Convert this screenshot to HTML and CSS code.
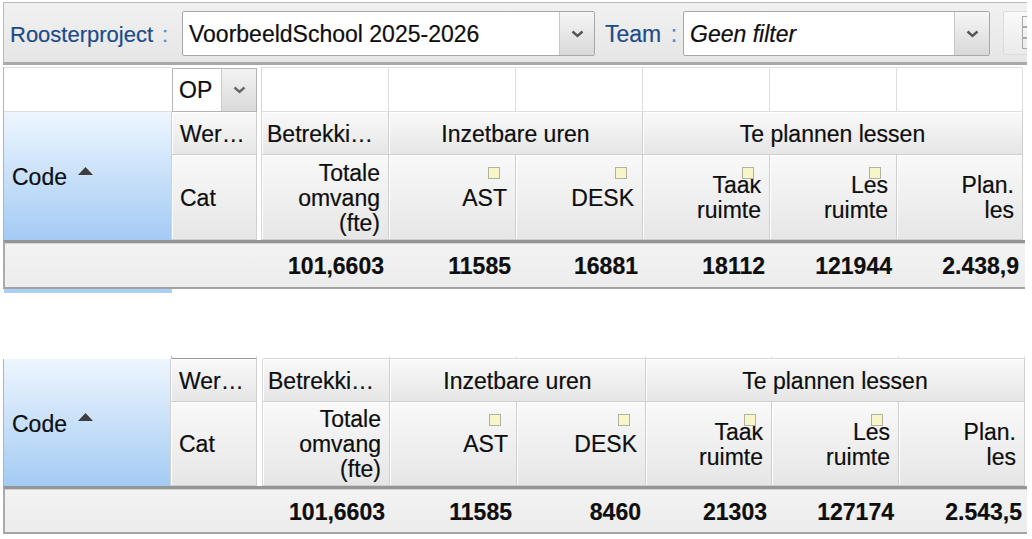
FILE: index.html
```html
<!DOCTYPE html>
<html lang="nl">
<head>
<meta charset="utf-8">
<title>Rooster</title>
<link rel="stylesheet" href="styles.css">
</head>
<body>
<div class="page">
  <div class="toolbar">
    <span class="label label-project">Roosterproject<span class="colon">:</span></span>
    <div class="combo combo-project">
      <span class="combo-text">VoorbeeldSchool 2025-2026</span>
      <span class="combo-btn"><svg width="13" height="8" viewBox="0 0 13 8"><polyline points="1.5,1.5 6.5,6 11.5,1.5" fill="none" stroke="#555" stroke-width="2.4"/></svg></span>
    </div>
    <span class="label label-team">Team&nbsp;<span class="colon colon-team">:</span></span>
    <div class="combo combo-team">
      <span class="combo-text italic">Geen filter</span>
      <span class="combo-btn"><svg width="13" height="8" viewBox="0 0 13 8"><polyline points="1.5,1.5 6.5,6 11.5,1.5" fill="none" stroke="#555" stroke-width="2.4"/></svg></span>
    </div>
    <div class="tool-btn">
      <svg class="tool-icon" width="10" height="34" viewBox="0 0 10 34"><rect x="0.5" y="0.5" width="12" height="10" fill="none" stroke="#a8a8a8"/><rect x="0.5" y="11.5" width="12" height="10" fill="none" stroke="#a8a8a8"/><rect x="0.5" y="22.5" width="12" height="10" fill="none" stroke="#a8a8a8"/></svg>
    </div>
  </div>

  <section class="grid grid-a">
    <div class="fc fc-blank"></div>
    <div class="fc fc-op">
      <div class="op-box"><span class="op-text">OP</span><span class="op-btn"><svg width="13" height="8" viewBox="0 0 13 8"><polyline points="1.5,1.5 6.5,6 11.5,1.5" fill="none" stroke="#666" stroke-width="2.4"/></svg></span></div>
    </div>
    <div class="gapcol"></div>
    <div class="fc"></div>
    <div class="fc"></div>
    <div class="fc"></div>
    <div class="fc"></div>
    <div class="fc"></div>
    <div class="fc"></div>

    <div class="code">Code <svg class="sort" width="15" height="8" viewBox="0 0 15 8"><polygon points="0,8 7.5,0 15,8" fill="#3e3e3e"/></svg></div>
    <div class="hd r1 left">Wer…</div>
    <div class="hd r1 left tight">Betrekki…</div>
    <div class="hd r1 center span2">Inzetbare uren</div>
    <div class="hd r1 center span3">Te plannen lessen</div>

    <div class="hd r2 left">Cat</div>
    <div class="hd r2">Totale<br>omvang<br>(fte)</div>
    <div class="hd r2"><span class="ind"></span>AST</div>
    <div class="hd r2"><span class="ind"></span>DESK</div>
    <div class="hd r2"><span class="ind"></span>Taak<br>ruimte</div>
    <div class="hd r2"><span class="ind"></span>Les<br>ruimte</div>
    <div class="hd r2">Plan.<br>les</div>
  </section>
  <div class="totals totals-a">
    <span></span><span></span><span></span>
    <span class="tv">101,6603</span>
    <span class="tv">11585</span>
    <span class="tv">16881</span>
    <span class="tv">18112</span>
    <span class="tv">121944</span>
    <span class="tv">2.438,9</span>
  </div>
  <div class="tail"></div>

  <section class="grid grid-b">
    <div class="stub stub-blank"></div>
    <div class="stub stub-op"></div>
    <div class="stub stub-gap"></div>
    <div class="stub"></div>
    <div class="stub"></div>
    <div class="stub"></div>
    <div class="stub"></div>
    <div class="stub"></div>
    <div class="stub"></div>

    <div class="code">Code <svg class="sort" width="15" height="8" viewBox="0 0 15 8"><polygon points="0,8 7.5,0 15,8" fill="#3e3e3e"/></svg></div>
    <div class="hd r1 left">Wer…</div>
    <div class="gapcol gapcol-b"></div>
    <div class="hd r1 left tight">Betrekki…</div>
    <div class="hd r1 center span2">Inzetbare uren</div>
    <div class="hd r1 center span3">Te plannen lessen</div>

    <div class="hd r2 left">Cat</div>
    <div class="hd r2">Totale<br>omvang<br>(fte)</div>
    <div class="hd r2"><span class="ind"></span>AST</div>
    <div class="hd r2"><span class="ind"></span>DESK</div>
    <div class="hd r2"><span class="ind"></span>Taak<br>ruimte</div>
    <div class="hd r2"><span class="ind"></span>Les<br>ruimte</div>
    <div class="hd r2">Plan.<br>les</div>
  </section>
  <div class="totals totals-b">
    <span></span><span></span><span></span>
    <span class="tv">101,6603</span>
    <span class="tv">11585</span>
    <span class="tv">8460</span>
    <span class="tv">21303</span>
    <span class="tv">127174</span>
    <span class="tv">2.543,5</span>
  </div>
</div>
</body>
</html>
```

FILE: styles.css
```css
html, body {
  margin: 0;
  padding: 0;
}
body {
  width: 1032px;
  height: 539px;
  overflow: hidden;
  background: #fff;
  font-family: "Liberation Sans", Arial, sans-serif;
  font-size: 23px;
  color: #0e0e0e;
  -webkit-text-stroke: 0.2px currentColor;
}
.page {
  padding: 2px 0 0 3px;
}

/* toolbar */
.toolbar {
  box-sizing: border-box;
  width: 1024px;
  height: 63px;
  border-top: 1px solid #b9b9b9;
  border-left: 1px solid #b9b9b9;
  border-bottom: 3px solid #a9a9a9;
  background: linear-gradient(#f1f1f1, #e6e6e6);
  display: flex;
  align-items: flex-start;
  padding: 8px 0 0 6px;
  overflow: hidden;
}
.label {
  flex: none;
  box-sizing: border-box;
  height: 45px;
  padding-top: 2px;
  display: flex;
  align-items: center;
  color: #1d4c88;
  white-space: nowrap;
}
.label-project { width: 172px; font-size: 22px; }
.label-team { width: 88px; padding-left: 10px; }
.colon { color: #4f8bcb; margin-left: 9px; }
.colon-team { margin-left: 3px; }
.combo {
  flex: none;
  box-sizing: border-box;
  height: 45px;
  border: 1px solid #a7a7a7;
  border-radius: 2px;
  background: #fff;
  display: flex;
}
.combo-project { width: 413px; }
.combo-team { width: 307px; }
.combo-text {
  flex: 1;
  display: flex;
  align-items: center;
  padding: 2px 0 0 6px;
  white-space: nowrap;
  color: #0e0e0e;
}
.italic { font-style: italic; }
.combo-btn {
  flex: none;
  width: 34px;
  border-left: 1px solid #c6c6c6;
  background: linear-gradient(#f6f6f6, #d8d8d8);
  display: flex;
  align-items: center;
  justify-content: center;
}
.tool-btn {
  flex: none;
  box-sizing: border-box;
  margin-left: 13px;
  width: 40px;
  height: 44px;
  border: 1px solid #dcdcdc;
  border-radius: 2px;
  background: linear-gradient(#f9f9f9, #eaeaea);
  display: flex;
  align-items: center;
  padding-left: 18px;
}

/* grids */
.grid {
  display: grid;
  width: max-content;
  border-left: 1px solid #b3b3b3;
}
.grid-a {
  grid-template-columns: 168px 85px 5px 127px 127px 127px 127px 127px 126px;
  grid-template-rows: 45px 43px 85px;
  margin-top: 2px;
}
.grid-b {
  grid-template-columns: 167px 86px 6px 127px 127px 129px 126px 127px 126px;
  grid-template-rows: 3px 43px 84px;
  margin-top: 63px;
  border-left-color: transparent;
}
.grid-b .code { box-shadow: -1px 0 0 #b3b3b3; }

/* filter row */
.fc {
  box-sizing: border-box;
  background: #fff;
  border-top: 1px solid #dedede;
  border-right: 1px solid #dedede;
  border-bottom: 1px solid #dedede;
}
.fc-blank { border-right: none; }
.fc-op {
  border: none;
  padding-top: 1px;
  display: flex;
}
.op-box {
  flex: 1;
  box-sizing: border-box;
  border: 1px solid #b4b4b4;
  background: #fff;
  display: flex;
}
.op-text {
  flex: 1;
  display: flex;
  align-items: center;
  padding-left: 6px;
}
.op-btn {
  flex: none;
  width: 34px;
  border-left: 1px solid #cacaca;
  background: linear-gradient(#f3f3f3, #dadada);
  display: flex;
  align-items: center;
  justify-content: center;
}
.gapcol {
  grid-column: 3;
  grid-row: 1 / span 3;
  background: #fff;
  border-right: 1px solid #d6d6d6;
}
.gapcol-b { grid-row: 2 / span 2; }

/* stub row (table 2) */
.stub {
  box-sizing: border-box;
  border-bottom: 1px solid #d8d8d8;
  border-right: 1px solid #e2e2e2;
}
.stub-blank { border: none; }
.stub-op { border-bottom: 1px solid #9a9a9a; border-left: 1px solid #bbb; }
.stub-gap { border: none; }

/* headers */
.code {
  grid-column: 1;
  grid-row: 2 / span 2;
  box-sizing: border-box;
  background: linear-gradient(#eef6fe, #a3cbf4);
  border-right: 1px solid #d0d0d0;
  padding: 3px 0 0 8px;
  display: flex;
  align-items: center;
  gap: 11px;
}
.sort { margin-bottom: 14px; }
.hd {
  box-sizing: border-box;
  position: relative;
  background: linear-gradient(#f9f9f9, #e6e6e6);
  border-right: 1px solid #cfcfcf;
  border-bottom: 1px solid #cfcfcf;
  box-shadow: inset 1px 1px 0 #fff;
  display: flex;
  align-items: center;
  justify-content: flex-end;
  text-align: right;
  white-space: nowrap;
  padding: 2px 8px 0;
}
.hd.r1 { padding-top: 3px; }
.hd.r2 { line-height: 25px; }
.hd.left { justify-content: flex-start; text-align: left; }
.hd.tight { padding-left: 5px; }
.hd.center { justify-content: center; text-align: center; }
.span2 { grid-column: span 2; }
.span3 { grid-column: span 3; }
.ind {
  position: absolute;
  top: 12px;
  right: 15px;
  box-sizing: border-box;
  width: 12px;
  height: 12px;
  border: 1px solid #b2b2a2;
  background: #f6f6c8;
}

/* totals */
.totals {
  display: grid;
  box-sizing: border-box;
  height: 49px;
  padding-top: 3px;
  border-top: 3px solid #959595;
  border-bottom: 2px solid #a3a3a3;
  border-left: 2px solid #ababab;
  background: linear-gradient(#f3f3f3, #ececec);
  box-shadow: inset 0 1px 0 #d4d4d4;
  align-items: center;
  font-weight: bold;
  color: #0e0e0e;
}
.totals-a {
  width: 1022px;
  grid-template-columns: 167px 85px 5px 127px 127px 127px 127px 127px 1fr;
}
.totals-b {
  width: 1024px;
  height: 48px;
  grid-template-columns: 166px 86px 6px 127px 127px 129px 126px 127px 1fr;
}
.tv {
  text-align: right;
  padding-right: 5px;
  white-space: nowrap;
}
.totals-a .tv:last-child { padding-right: 6px; }
.tail {
  margin-left: 1px;
  width: 168px;
  height: 4px;
  background: #a9cff5;
}
```
